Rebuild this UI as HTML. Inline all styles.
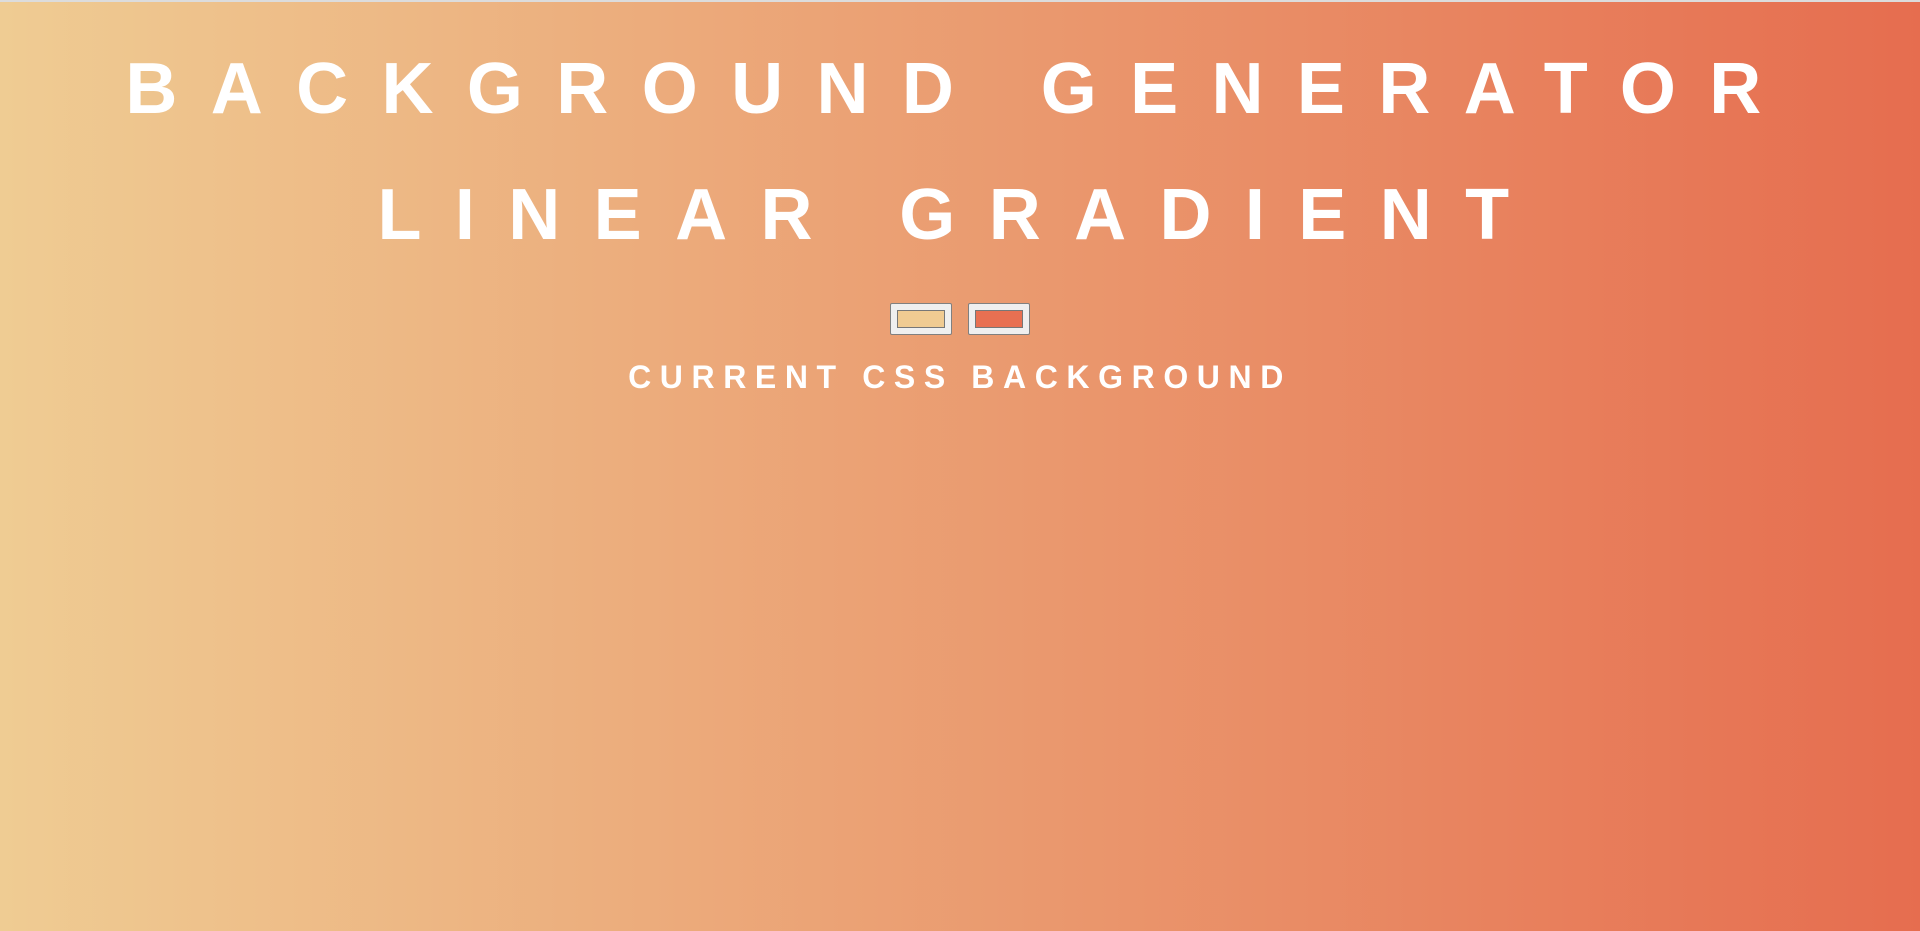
<!DOCTYPE html>
<html><head><meta charset="utf-8"><style>
html,body{margin:0;padding:0;width:1920px;height:931px;overflow:hidden}
body{background:linear-gradient(to right,#efcc93,#e66d4f);font-family:"Liberation Sans",Arial,sans-serif;color:#fff;position:relative;border-top:2px solid #dcdcdc;box-sizing:border-box}
.t{position:absolute;left:0;width:1920px;text-align:center;font-weight:bold;white-space:nowrap}
.h{font-size:72px;line-height:72px;letter-spacing:33.4px}
.s{font-size:32px;line-height:32px;letter-spacing:8.6px}
.in{position:absolute;top:301px;width:60px;height:30px;background:#efefef;border:1px solid #808080;border-radius:2px}
.in div{position:absolute;left:6px;top:6px;width:46px;height:16px;border:1px solid #777}
</style></head><body>
<div class="t h" style="top:51px">BACKGROUND GENERATOR</div>
<div class="t h" style="top:177px">LINEAR GRADIENT</div>
<div class="in" style="left:890px"><div style="background:#f0cb92"></div></div>
<div class="in" style="left:968px"><div style="background:#e87052"></div></div>
<div class="t s" style="top:359px">CURRENT CSS BACKGROUND</div>
</body></html>
